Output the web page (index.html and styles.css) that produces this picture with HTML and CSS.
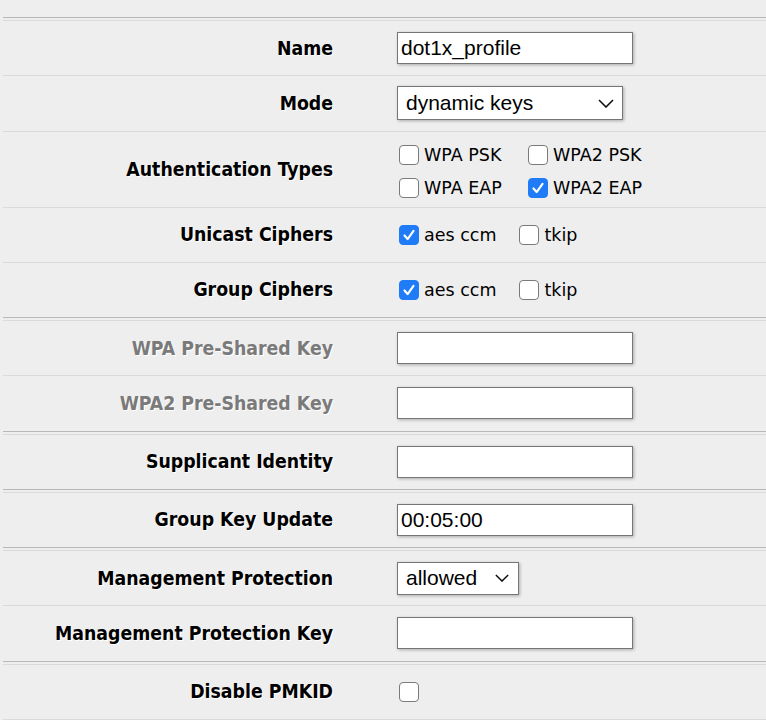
FILE: index.html
```html
<!DOCTYPE html>
<html>
<head>
<meta charset="utf-8">
<link rel="stylesheet" href="styles.css">
</head>
<body>
<div class="form">
  <div class="group">
    <div class="row">
      <div class="label">Name</div>
      <div class="ctl"><input class="text" type="text" value="dot1x_profile"></div>
    </div>
    <div class="row">
      <div class="label">Mode</div>
      <div class="ctl">
        <span class="select mode"><span class="sel-text">dynamic keys</span>
          <svg class="chev" viewBox="0 0 16 9" width="16" height="9"><path d="M1 1 L8 8 L15 1" fill="none" stroke="#111" stroke-width="1.6"/></svg>
        </span>
      </div>
    </div>
    <div class="row tall">
      <div class="label">Authentication Types</div>
      <div class="ctl">
        <div class="cbgrid">
          <label class="cb"><span class="box"></span>WPA PSK</label>
          <label class="cb"><span class="box"></span>WPA2 PSK</label>
          <label class="cb"><span class="box"></span>WPA EAP</label>
          <label class="cb"><span class="box on"><svg viewBox="0 0 20 20" width="20" height="20"><path d="M5 10.5 L8.5 14.5 L15 5.5" fill="none" stroke="#fff" stroke-width="2.4" stroke-linecap="round" stroke-linejoin="round"/></svg></span>WPA2 EAP</label>
        </div>
      </div>
    </div>
    <div class="row">
      <div class="label">Unicast Ciphers</div>
      <div class="ctl cbrow">
        <label class="cb"><span class="box on"><svg viewBox="0 0 20 20" width="20" height="20"><path d="M5 10.5 L8.5 14.5 L15 5.5" fill="none" stroke="#fff" stroke-width="2.4" stroke-linecap="round" stroke-linejoin="round"/></svg></span>aes ccm</label>
        <label class="cb"><span class="box"></span>tkip</label>
      </div>
    </div>
    <div class="row">
      <div class="label">Group Ciphers</div>
      <div class="ctl cbrow">
        <label class="cb"><span class="box on"><svg viewBox="0 0 20 20" width="20" height="20"><path d="M5 10.5 L8.5 14.5 L15 5.5" fill="none" stroke="#fff" stroke-width="2.4" stroke-linecap="round" stroke-linejoin="round"/></svg></span>aes ccm</label>
        <label class="cb"><span class="box"></span>tkip</label>
      </div>
    </div>
  </div>
  <div class="group">
    <div class="row">
      <div class="label dim">WPA Pre-Shared Key</div>
      <div class="ctl"><input class="text" type="text" value=""></div>
    </div>
    <div class="row">
      <div class="label dim">WPA2 Pre-Shared Key</div>
      <div class="ctl"><input class="text" type="text" value=""></div>
    </div>
  </div>
  <div class="group">
    <div class="row">
      <div class="label">Supplicant Identity</div>
      <div class="ctl"><input class="text" type="text" value=""></div>
    </div>
  </div>
  <div class="group">
    <div class="row">
      <div class="label">Group Key Update</div>
      <div class="ctl"><input class="text" type="text" value="00:05:00"></div>
    </div>
  </div>
  <div class="group">
    <div class="row">
      <div class="label">Management Protection</div>
      <div class="ctl">
        <span class="select allowed"><span class="sel-text">allowed</span>
          <svg class="chev" viewBox="0 0 16 9" width="14" height="8"><path d="M1 1 L8 8 L15 1" fill="none" stroke="#111" stroke-width="1.7"/></svg>
        </span>
      </div>
    </div>
    <div class="row">
      <div class="label">Management Protection Key</div>
      <div class="ctl"><input class="text" type="text" value=""></div>
    </div>
  </div>
  <div class="group last">
    <div class="row">
      <div class="label">Disable PMKID</div>
      <div class="ctl cbrow">
        <label class="cb"><span class="box"></span></label>
      </div>
    </div>
  </div>
</div>
</body>
</html>
```

FILE: styles.css
```css
html, body {
  margin: 0;
  padding: 0;
  background: #eeeeee;
}

.form {
  padding: 17px 0 0 3px;
}

.group {
  border-top: 1px solid #b8b8b8;
  padding-top: 2px;
}

.group.last {
  border-bottom: 1px solid #dadada;
}

.row {
  border-top: 1px solid #dadada;
  display: grid;
  grid-template-columns: 330px 1fr;
  column-gap: 64px;
  align-items: center;
  height: 54.25px;
}

.row.tall {
  height: 75px;
}

.label {
  text-align: right;
  font-family: "DejaVu Sans Condensed", "DejaVu Sans", sans-serif;
  font-stretch: condensed;
  font-weight: bold;
  font-size: 19.3px;
  color: #000;
  text-shadow: 1px 1px 0 #fff;
  white-space: nowrap;
}

.label.dim {
  color: #7a7a7a;
}

.ctl {
  display: flex;
  align-items: center;
}

.text {
  box-sizing: border-box;
  width: 236px;
  height: 32px;
  margin: 0;
  padding: 0 3px;
  border: 1px solid #767676;
  background: #fff;
  font-family: "Liberation Sans", Arial, sans-serif;
  font-size: 21px;
  color: #000;
  box-shadow: 1px 1px 3px rgba(0, 0, 0, 0.28);
  outline: none;
}

.select {
  position: relative;
  box-sizing: border-box;
  display: flex;
  align-items: center;
  height: 34px;
  border: 1px solid #767676;
  background: #fff;
  padding-left: 8px;
  font-family: "Liberation Sans", Arial, sans-serif;
  font-size: 21px;
  color: #000;
  box-shadow: 1px 1px 3px rgba(0, 0, 0, 0.28);
}

.select.mode {
  width: 226px;
}

.select.allowed {
  width: 122px;
  height: 33px;
}

.chev {
  position: absolute;
  right: 8px;
  top: 50%;
  margin-top: -4px;
}

.select.allowed .chev {
  right: 9px;
}

.cbgrid {
  display: grid;
  grid-template-columns: 129px auto;
  row-gap: 13px;
  margin-top: 4px;
}

.cbrow {
  gap: 21px;
}

.cb {
  display: flex;
  align-items: center;
  font-family: "DejaVu Sans", Verdana, sans-serif;
  font-size: 17.5px;
  color: #000;
  white-space: nowrap;
}

.box {
  box-sizing: border-box;
  width: 20px;
  height: 20px;
  margin: 0 5px 0 2px;
  border: 1px solid #7a7a7a;
  border-radius: 4px;
  background: #fff;
  display: inline-flex;
  align-items: center;
  justify-content: center;
  flex: none;
}

.box.on {
  background: #1f7bf6;
  border-color: #1f7bf6;
}

.box svg {
  display: block;
}
```
